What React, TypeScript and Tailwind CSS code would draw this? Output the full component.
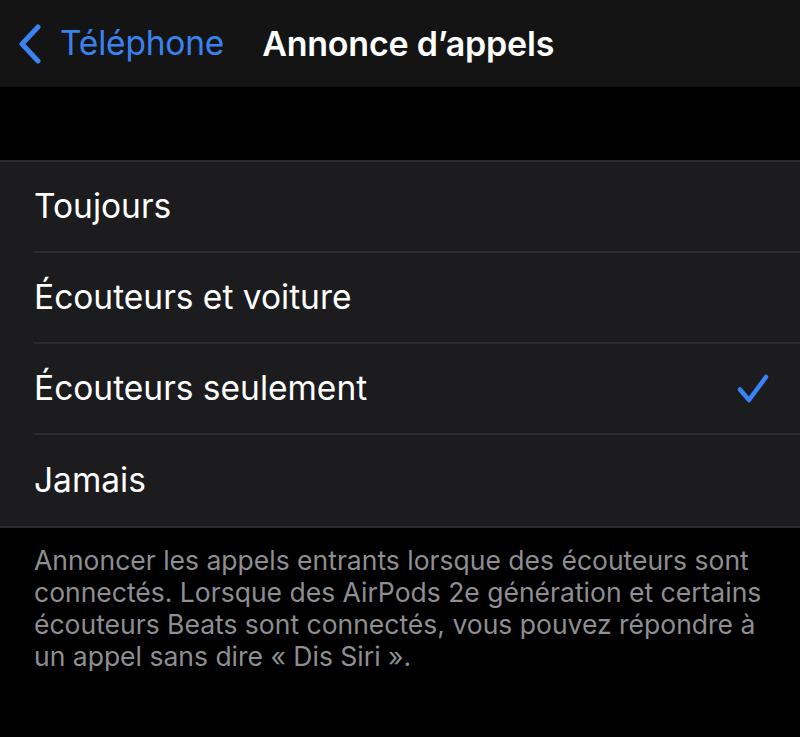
const options = ["Toujours", "Écouteurs et voiture", "Écouteurs seulement", "Jamais"];
const selected = "Écouteurs seulement";

function Check() {
  return (
    <svg width="34" height="34" viewBox="0 0 34 34" fill="none" className="shrink-0">
      <path d="M4 17.5 L13 28 L30 5" stroke="#3a82f7" strokeWidth="4.5" strokeLinecap="round" strokeLinejoin="round" />
    </svg>
  );
}

export default function App() {
  return (
    <div className="min-h-screen w-full bg-black text-white" style={{ fontFamily: "Inter, 'Noto Sans', sans-serif" }}>
      {/* Nav bar */}
      <div className="h-[87px] bg-[#141414] flex items-center">
        <div className="flex items-center pl-[18px] text-[#3a82f0]">
          <svg width="24" height="40" viewBox="0 0 24 40" fill="none">
            <path d="M20 3 L4 20 L20 37" stroke="#3a82f0" strokeWidth="5" strokeLinecap="round" strokeLinejoin="round" />
          </svg>
          <span className="ml-[18px] text-[33.5px] tracking-[-0.2px]">Téléphone</span>
        </div>
        <h1 className="ml-[38px] text-[34px] font-semibold tracking-[-0.2px]">Annonce d’appels</h1>
      </div>

      {/* Spacer */}
      <div className="h-[73px]" />

      {/* List */}
      <div className="bg-[#1c1c1e] border-t-2 border-b-2 border-[#2c2c2e]">
        {options.map((o, i) => (
          <div key={o} className="pl-[34px]">
            <div className={`h-[91px] flex items-center pr-[30px] ${i < options.length - 1 ? "border-b-2 border-[#2c2c2e]" : ""}`}>
              <span className="flex-1 text-[33.5px] text-white">{o}</span>
              {o === selected && <Check />}
            </div>
          </div>
        ))}
      </div>

      {/* Footer */}
      <p className="pl-[34px] pr-[30px] pt-[16px] text-[26.5px] leading-[32px] text-[#8e8e93]">
        Annoncer les appels entrants lorsque des écouteurs sont connectés. Lorsque des AirPods 2e génération et certains écouteurs Beats sont connectés, vous pouvez répondre à un appel sans dire « Dis Siri ».
      </p>
    </div>
  );
}
